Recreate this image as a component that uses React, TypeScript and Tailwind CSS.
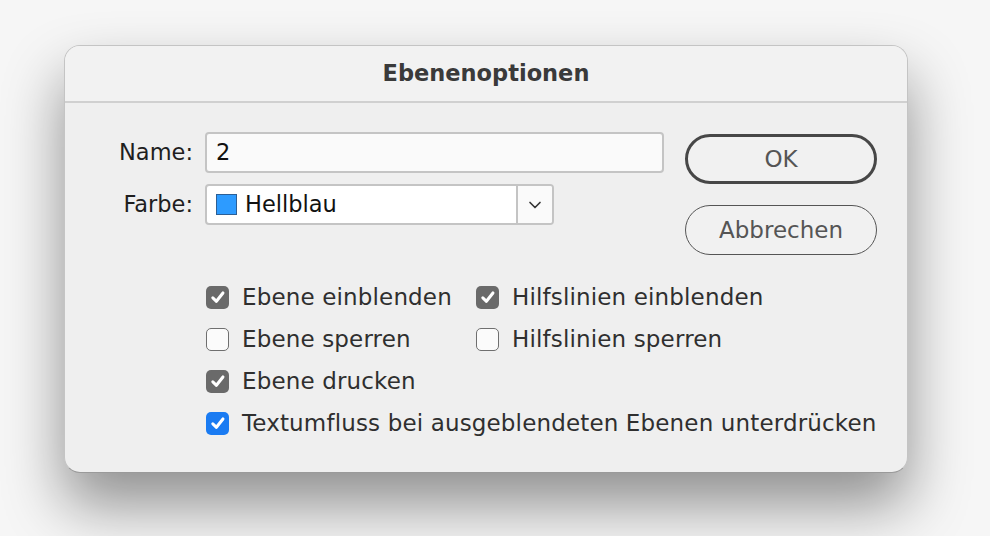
import { ChevronDown } from "lucide-react";

function Check({ checked, accent }: { checked: boolean; accent?: boolean }) {
  if (!checked) {
    return (
      <span className="block size-[23px] shrink-0 rounded-[5px] border-[1.5px] border-[#6f6f6f] bg-[#fbfbfb]" />
    );
  }
  return (
    <span
      className={`grid size-[23px] shrink-0 place-items-center rounded-[5px] ${
        accent ? "bg-[#1a7bf2]" : "bg-[#6a6a6a]"
      }`}
    >
      <svg viewBox="0 0 16 16" className="size-[18px]">
        <path
          d="M3.4 8.8 L6.6 11.8 L12.4 4.4"
          fill="none"
          stroke="white"
          strokeWidth="2.7"
          strokeLinecap="round"
          strokeLinejoin="round"
        />
      </svg>
    </span>
  );
}

function Option({
  label,
  checked,
  accent,
  className = "",
}: {
  label: string;
  checked: boolean;
  accent?: boolean;
  className?: string;
}) {
  return (
    <label className={`flex h-[42px] items-center gap-[13px] ${className}`}>
      <Check checked={checked} accent={accent} />
      <span className="whitespace-nowrap">{label}</span>
    </label>
  );
}

export default function App() {
  return (
    <div
      className="h-[536px] w-[990px] overflow-hidden bg-[#f6f6f6] pl-[64px] pt-[45px] text-[#2a2a2a]"
      style={{ fontFamily: '"DejaVu Sans", "Noto Sans", sans-serif' }}
    >
      <div className="h-[428px] w-[844px] overflow-hidden rounded-[16px] border border-[#c4c4c4] border-b-[#9a9a9a] bg-[#efefef] shadow-[0_32px_60px_rgba(0,0,0,0.42)]">
        <div className="flex h-[57px] items-center justify-center border-b-2 border-[#d0d0d0] bg-[#f2f2f2]">
          <h1 className="text-[22.5px] font-bold text-[#3a3a3a]">Ebenenoptionen</h1>
        </div>

        <div className="flex pl-[40px] pr-[30px] pt-[29px]">
          <div className="flex flex-col gap-[11px]">
            <div className="flex items-center gap-[12px]">
              <span className="w-[88px] text-right text-[22.5px] text-[#1e1e1e]">Name:</span>
              <div className="flex h-[41px] w-[459px] items-center rounded-[4px] border-2 border-[#c4c4c4] bg-[#fafafa] px-[9px] text-[22.5px] text-[#111]">
                2
              </div>
            </div>
            <div className="flex items-center gap-[12px]">
              <span className="w-[88px] text-right text-[22.5px] text-[#1e1e1e]">Farbe:</span>
              <div className="flex h-[41px] w-[349px] items-center overflow-hidden rounded-[4px] border-2 border-[#c4c4c4] bg-white">
                <div className="flex flex-1 items-center gap-[8px] pl-[9px] text-[22.5px] text-[#111]">
                  <span className="size-[21px] border-[1.5px] border-[#2d5f95] bg-[#2d9bff]" />
                  Hellblau
                </div>
                <div className="grid h-full w-[36px] place-items-center border-l-2 border-[#c4c4c4] bg-[#fafafa]">
                  <ChevronDown className="size-[20px] text-[#333]" strokeWidth={2} />
                </div>
              </div>
            </div>
          </div>

          <div className="ml-auto flex flex-col gap-[21px] pt-[2px]">
            <button className="h-[50px] w-[192px] rounded-full border-[3px] border-[#474747] bg-[#f1f1f1] text-[23px] text-[#555]">
              OK
            </button>
            <button className="h-[50px] w-[192px] rounded-full border-[1.5px] border-[#555] bg-[#f1f1f1] text-[23px] text-[#555]">
              Abbrechen
            </button>
          </div>
        </div>

        <div className="mt-[21px] pl-[141px] text-[23px] tracking-[0.15px] text-[#2f2f2f]">
          <div className="flex">
            <Option className="w-[270px]" label="Ebene einblenden" checked />
            <Option label="Hilfslinien einblenden" checked />
          </div>
          <div className="flex">
            <Option className="w-[270px]" label="Ebene sperren" checked={false} />
            <Option label="Hilfslinien sperren" checked={false} />
          </div>
          <Option label="Ebene drucken" checked />
          <Option label="Textumfluss bei ausgeblendeten Ebenen unterdrücken" checked accent />
        </div>
      </div>
    </div>
  );
}
